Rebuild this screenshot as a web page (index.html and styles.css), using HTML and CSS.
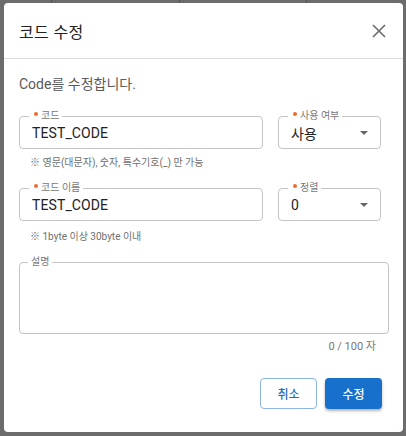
FILE: index.html
```html
<!DOCTYPE html>
<html lang="ko">
<head>
<meta charset="utf-8">
<link rel="stylesheet" href="styles.css">
</head>
<body>
<div class="backdrop">
  <div class="bg-head">
    <span class="bg-cell c1"></span><span class="bg-cell c2"></span><span class="bg-cell c3"></span><span class="bg-cell c4"></span>
  </div>
  <div class="dialog">
    <div class="dlg-head">
      <span class="title">코드 수정</span>
      <svg class="close" width="14" height="14" viewBox="0 0 14 14"><path d="M1 1L13 13M13 1L1 13" stroke="#6b6b6b" stroke-width="1.6" fill="none"/></svg>
    </div>
    <div class="dlg-body">
      <p class="desc">Code를 수정합니다.</p>
      <div class="row">
        <div class="field wide">
          <span class="flabel"><i class="req"></i>코드</span>
          <span class="val">TEST_CODE</span>
        </div>
        <div class="field narrow">
          <span class="flabel"><i class="req"></i>사용 여부</span>
          <span class="val">사용</span>
          <span class="caret"></span>
        </div>
      </div>
      <p class="help">※ 영문(대문자), 숫자, 특수기호(_) 만 가능</p>
      <div class="row row2">
        <div class="field wide">
          <span class="flabel"><i class="req"></i>코드 이름</span>
          <span class="val">TEST_CODE</span>
        </div>
        <div class="field narrow">
          <span class="flabel"><i class="req"></i>정렬</span>
          <span class="val">0</span>
          <span class="caret"></span>
        </div>
      </div>
      <p class="help help2">※ 1byte 이상 30byte 이내</p>
      <div class="field area">
        <span class="flabel plain">설명</span>
      </div>
      <p class="counter">0 / 100 자</p>
      <div class="actions">
        <button class="btn outline">취소</button>
        <button class="btn primary">수정</button>
      </div>
    </div>
  </div>
</div>
</body>
</html>
```
FILE: styles.css
```css
* { box-sizing: border-box; }
html, body { margin: 0; padding: 0; }
body {
  width: 406px;
  height: 436px;
  overflow: hidden;
  background: #6c6c6c;
  font-family: Roboto, "Noto Sans CJK KR", sans-serif;
}
.backdrop {
  position: relative;
  width: 406px;
  height: 436px;
  padding: 3px 3px 4px 4px;
}
.bg-head {
  position: absolute;
  left: 0; top: 0;
  width: 406px;
  height: 3px;
  display: flex;
}
.bg-cell { border-right: 1px solid #555; height: 3px; }
.c1 { width: 52px; }
.c2 { width: 128px; }
.c3 { width: 127px; }
.c4 { width: 99px; border-right: none; }
.dialog {
  position: relative;
  width: 399px;
  height: 429px;
  background: #fff;
  border-radius: 4px;
  display: flex;
  flex-direction: column;
}
.dlg-head {
  height: 56px;
  border-bottom: 1px solid #dcdcdc;
  display: flex;
  align-items: center;
  justify-content: space-between;
  padding: 0 17px 0 15px;
}
.title {
  font-family: "Noto Sans CJK KR", sans-serif;
  font-size: 16px;
  font-weight: 400;
  color: #222;
  letter-spacing: 0.2px;
}
.close { display: block; margin-top: 0; }
.dlg-body {
  padding: 0 15px;
  display: flex;
  flex-direction: column;
}
.desc {
  margin: 16px 0 0;
  font-size: 14px;
  line-height: 18px;
  color: #5a5a5a;
}
.row {
  display: flex;
  gap: 15px;
  margin-top: 23px;
  width: 362px;
}
.row2 { margin-top: 18px; }
.field {
  position: relative;
  border: 1px solid #c4c4c4;
  border-radius: 4px;
  height: 33px;
  display: flex;
  align-items: center;
  padding: 0 12px;
}
.wide { width: 244px; }
.narrow { width: 103px; padding-left: 12px; }
.val {
  font-size: 14px;
  color: #222;
  letter-spacing: 0.1px;
}
.flabel {
  position: absolute;
  left: 9px;
  top: -7px;
  padding: 0 3px;
  background: #fff;
  font-size: 10px;
  line-height: 12px;
  color: #777;
  display: flex;
  align-items: center;
}
.req {
  display: inline-block;
  width: 4px;
  height: 4px;
  border-radius: 50%;
  background: #f26b2c;
  margin: 0 3px 4px 2px;
}
.caret {
  position: absolute;
  right: 12px;
  top: 14px;
  width: 0; height: 0;
  border-left: 4px solid transparent;
  border-right: 4px solid transparent;
  border-top: 4px solid #666;
}
.help {
  margin: 7px 0 0 11px;
  font-size: 10px;
  line-height: 14px;
  color: #6f6f6f;
}
.help2 { margin-top: 9px; }
.area {
  margin-top: 18px;
  width: 370px;
  height: 72px;
}
.flabel.plain { left: 8px; }
.counter {
  margin: 6px 12px 0 0;
  text-align: right;
  font-size: 11px;
  line-height: 14px;
  color: #777;
}
.actions {
  display: flex;
  justify-content: flex-end;
  gap: 8px;
  margin-top: 24px;
  width: 363px;
}
.btn {
  width: 57px;
  height: 31px;
  border-radius: 4px;
  font-family: Roboto, "Noto Sans CJK KR", sans-serif;
  font-size: 12px;
  font-weight: 500;
  padding: 0;
}
.outline {
  background: #fff;
  border: 1px solid #8db6e6;
  color: #1a6fc8;
}
.primary {
  background: #1670cc;
  border: none;
  color: #fff;
  box-shadow: 0 2px 3px rgba(0,0,0,0.3);
}
```
